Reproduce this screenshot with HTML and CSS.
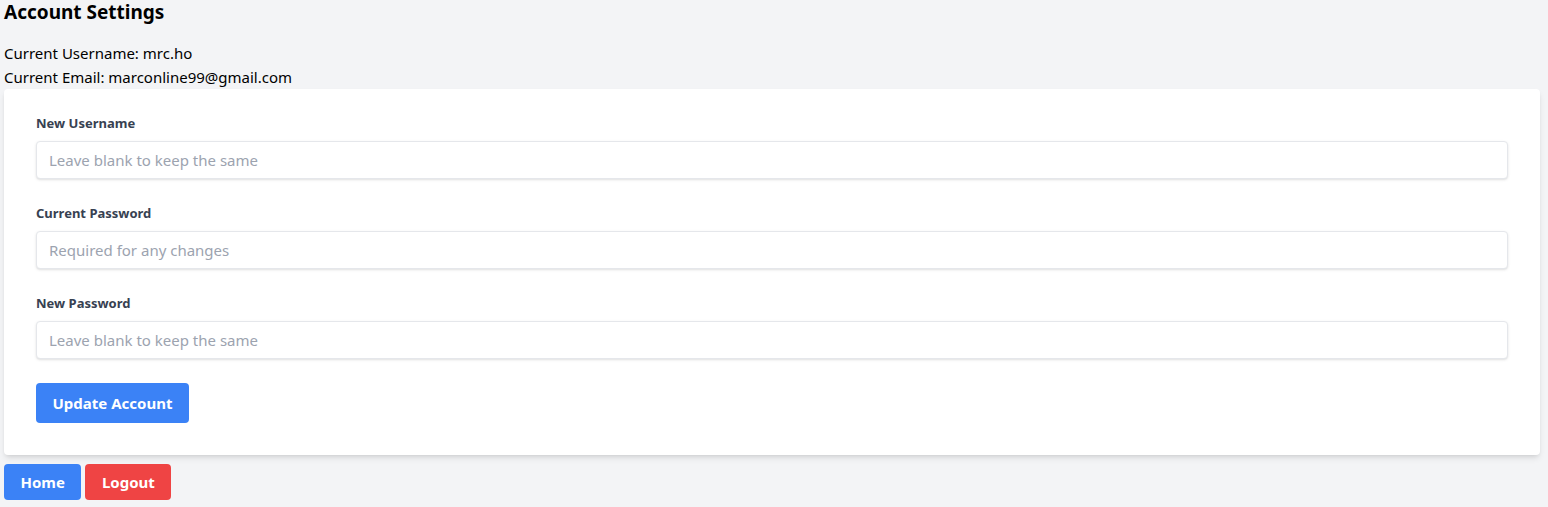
FILE: index.html
```html
<!DOCTYPE html>
<html lang="en">
<head>
<meta charset="utf-8">
<title>Account Settings</title>
<link rel="stylesheet" href="styles.css">
</head>
<body>
<h1 class="title">Account Settings</h1>
<p class="info">Current Username: mrc.ho</p>
<p class="info">Current Email: marconline99@gmail.com</p>
<form class="card">
  <div class="field">
    <label class="label" for="u">New Username</label>
    <input class="input" id="u" type="text" placeholder="Leave blank to keep the same">
  </div>
  <div class="field">
    <label class="label" for="cp">Current Password</label>
    <input class="input" id="cp" type="password" placeholder="Required for any changes">
  </div>
  <div class="field">
    <label class="label" for="np">New Password</label>
    <input class="input" id="np" type="password" placeholder="Leave blank to keep the same">
  </div>
  <button class="btn btn-blue" type="button">Update Account</button>
</form>
<div class="nav">
  <button class="btn btn-small btn-blue" type="button">Home</button>
  <button class="btn btn-small btn-red" type="button">Logout</button>
</div>
</body>
</html>
```
FILE: styles.css
```css
html, body {
  margin: 0;
}
body {
  padding: 0 8px 0 4px;
  background: #f3f4f6;
  font-family: "Noto Sans", "Open Sans", sans-serif;
  color: #111827;
}
.title {
  margin: 0 0 17px;
  font-size: 19px;
  line-height: 24px;
  font-weight: 700;
  color: #000;
}
.info {
  margin: 0;
  font-size: 15px;
  line-height: 24px;
  color: #000;
}
.card {
  background: #fff;
  border-radius: 4px;
  box-shadow: 0 4px 6px -1px rgba(0,0,0,0.1), 0 2px 4px -2px rgba(0,0,0,0.1);
  padding: 24px 32px 32px;
  display: flex;
  flex-direction: column;
  align-items: flex-start;
}
.field {
  width: 100%;
  display: flex;
  flex-direction: column;
  margin-bottom: 24px;
}
.label {
  font-size: 13px;
  line-height: 20px;
  font-weight: 700;
  color: #374151;
  margin-bottom: 8px;
}
.input {
  box-sizing: border-box;
  width: 100%;
  height: 38px;
  margin: 0;
  padding: 0 12px;
  border: 1px solid #e5e7eb;
  border-radius: 4px;
  box-shadow: 0 1px 3px 0 rgba(0,0,0,0.1), 0 1px 2px -1px rgba(0,0,0,0.1);
  font-family: inherit;
  font-size: 15px;
  color: #374151;
  background: #fff;
  outline: none;
}
.input::placeholder {
  color: #9ca3af;
}
.btn {
  border: 0;
  margin: 0;
  border-radius: 4px;
  padding: 8px 16.5px;
  font-family: inherit;
  font-size: 15px;
  line-height: 24px;
  font-weight: 700;
  color: #fff;
  cursor: pointer;
}
.btn-blue { background: #3b82f6; }
.btn-red { background: #ef4444; }
.btn-small { padding: 6px 16.5px; }
.nav {
  margin-top: 9px;
  display: flex;
  gap: 4px;
}
```
